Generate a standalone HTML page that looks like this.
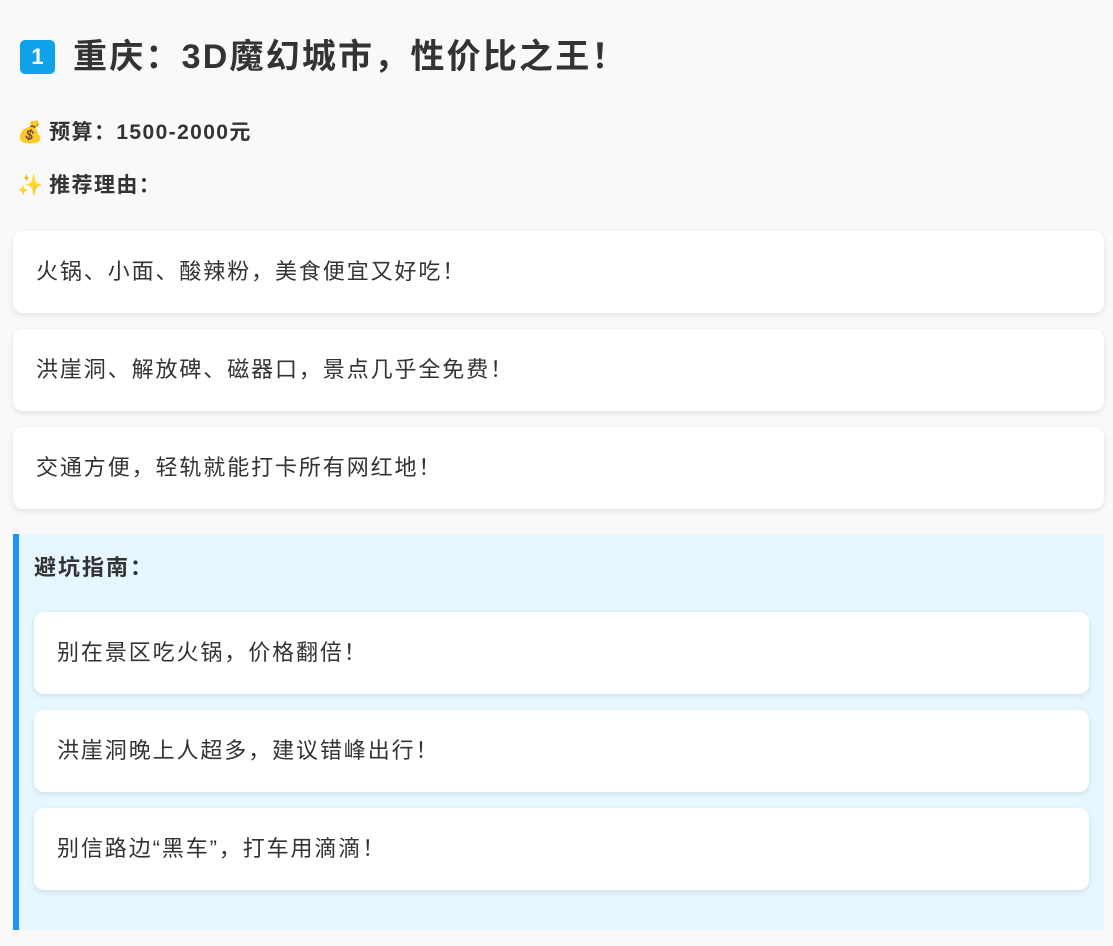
<!DOCTYPE html>
<html><head><meta charset="utf-8"><style>
body{margin:0;background:#f9f9f9;font-family:"Liberation Sans","Noto Sans CJK SC",sans-serif;color:#333;width:1113px;height:946px;overflow:hidden;position:relative}
.abs{position:absolute}
.badge{left:20px;top:40px;width:35px;height:34px;background:#10a2e8;border-radius:5px;color:#fff;font-weight:bold;font-size:22px;line-height:34px;text-align:center}
h1{position:absolute;left:73px;top:34px;margin:0;font-size:34px;letter-spacing:2.2px;line-height:46px;font-weight:bold;color:#333}
.line{position:absolute;left:17px;font-size:21px;letter-spacing:1.4px;font-weight:bold;line-height:28px}
.line .e{margin-right:6px;letter-spacing:0}
.card{position:absolute;background:#fff;border-radius:10px;box-shadow:0 2px 6px rgba(0,0,0,0.1);height:82px;line-height:82px;font-size:22px;letter-spacing:1.9px;color:#333}
.tips{position:absolute;left:13px;top:534px;width:1091px;height:396px;background:#e6f7ff;border-left:6px solid #1e90ff;box-sizing:border-box}
</style></head><body>
<div class="abs badge">1</div>
<h1>重庆：3D魔幻城市，性价比之王！</h1>
<div class="line" style="top:119px"><span class="e">💰</span>预算：1500-2000元</div>
<div class="line" style="top:172px"><span class="e">✨</span>推荐理由：</div>
<div class="card" style="left:13px;top:231px;width:1091px;padding-left:23px;box-sizing:border-box">火锅、小面、酸辣粉，美食便宜又好吃！</div>
<div class="card" style="left:13px;top:329px;width:1091px;padding-left:23px;box-sizing:border-box">洪崖洞、解放碑、磁器口，景点几乎全免费！</div>
<div class="card" style="left:13px;top:427px;width:1091px;padding-left:23px;box-sizing:border-box">交通方便，轻轨就能打卡所有网红地！</div>
<div class="tips"></div>
<div class="line" style="left:34px;top:554px;font-size:22px;letter-spacing:2px">避坑指南：</div>
<div class="card" style="left:34px;top:612px;width:1055px;padding-left:23px;box-sizing:border-box">别在景区吃火锅，价格翻倍！</div>
<div class="card" style="left:34px;top:710px;width:1055px;padding-left:23px;box-sizing:border-box">洪崖洞晚上人超多，建议错峰出行！</div>
<div class="card" style="left:34px;top:808px;width:1055px;padding-left:23px;box-sizing:border-box">别信路边“黑车”，打车用滴滴！</div>
</body></html>
